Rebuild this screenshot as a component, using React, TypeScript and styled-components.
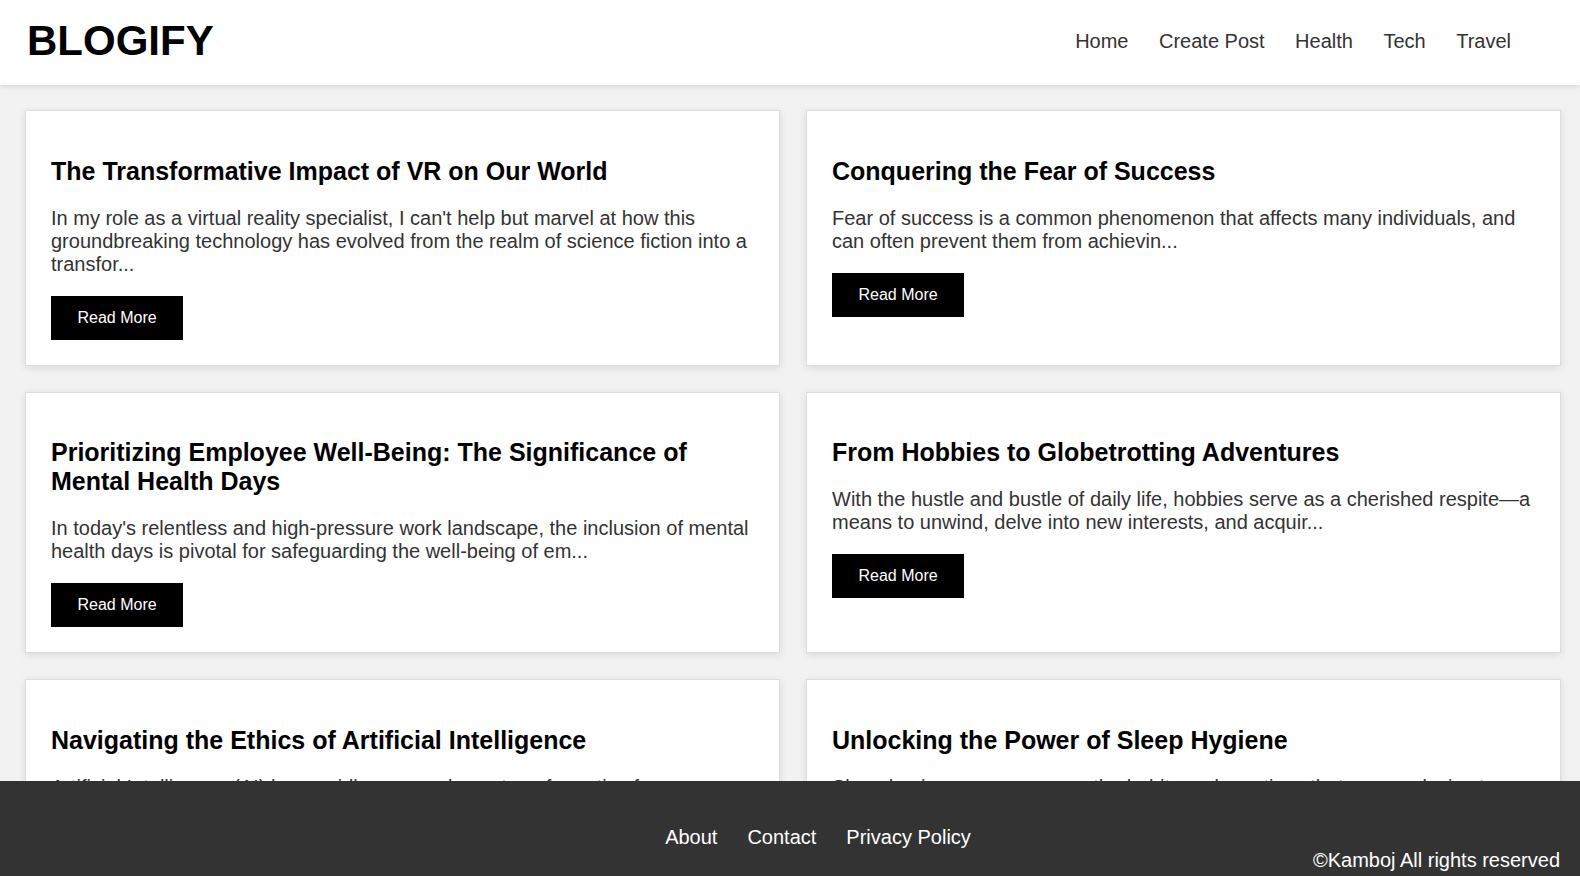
import {createGlobalStyle, styled} from 'styled-components';

const GlobalStyle = createGlobalStyle`
  html,
  body {
    margin: 0;
    padding: 0;
  }
  body {
    background: #f2f2f2;
    font-family: 'Liberation Sans', Arial, sans-serif;
    font-size: 20px;
    color: #333;
  }
`;

const Header = styled.header`
  position: relative;
  z-index: 2;
  height: 85px;
  box-sizing: border-box;
  padding: 0 69px 0 27px;
  display: flex;
  align-items: center;
  justify-content: space-between;
  background: #fff;
  box-shadow: 0 2px 5px rgba(0, 0, 0, 0.1);
`;

const Logo = styled.h1`
  margin: 0 0 3px;
  font-size: 42px;
  font-weight: bold;
  color: #000;
`;

const Nav = styled.nav`
  display: flex;
  gap: 30.5px;
  margin-bottom: 2px;
`;

const NavLink = styled.a`
  font-size: 20px;
  color: #333;
  text-decoration: none;
  cursor: pointer;
`;

const PostGrid = styled.main`
  display: grid;
  grid-template-columns: 1fr 1fr;
  gap: 26px;
  padding: 25px 19px 140px 25px;
`;

const Card = styled.article`
  background: #fff;
  border: 1px solid #ddd;
  box-shadow: 0 2px 8px rgba(0, 0, 0, 0.1);
  padding: 25px;
`;

const CardTitle = styled.h2`
  margin: 20.75px 0;
  font-size: 25px;
  font-weight: bold;
  color: #000;
`;

const Excerpt = styled.p`
  margin: 20px 0;
  font-size: 20px;
  color: #333;
`;

const ReadMore = styled.a`
  display: inline-block;
  vertical-align: top;
  padding: 13px 26.5px;
  background: #000;
  color: #fff;
  font-size: 16px;
  text-decoration: none;
  cursor: pointer;
`;

// fixed footer sits over the bottom of the post list
const Footer = styled.footer`
  position: fixed;
  left: 0;
  right: 0;
  bottom: 0;
  z-index: 3;
  height: 95px;
  box-sizing: border-box;
  padding: 45px 20px 4px;
  background: #333;
  color: #fff;
`;

const FooterLinks = styled.div`
  display: flex;
  justify-content: center;
  gap: 30px;
  padding-left: 56px;
`;

const FooterLink = styled.a`
  color: #fff;
  font-size: 20px;
  text-decoration: none;
  cursor: pointer;
`;

const Copyright = styled.p`
  margin: 0;
  text-align: right;
  font-size: 20px;
`;

type Post = Readonly<{title: string; excerpt: string}>;

const posts: Post[] = [
  {
    title: 'The Transformative Impact of VR on Our World',
    excerpt:
      "In my role as a virtual reality specialist, I can't help but marvel at how this groundbreaking technology has evolved from the realm of science fiction into a transfor...",
  },
  {
    title: 'Conquering the Fear of Success',
    excerpt:
      'Fear of success is a common phenomenon that affects many individuals, and can often prevent them from achievin...',
  },
  {
    title: 'Prioritizing Employee Well-Being: The Significance of Mental Health Days',
    excerpt:
      "In today's relentless and high-pressure work landscape, the inclusion of mental health days is pivotal for safeguarding the well-being of em...",
  },
  {
    title: 'From Hobbies to Globetrotting Adventures',
    excerpt:
      'With the hustle and bustle of daily life, hobbies serve as a cherished respite\u2014a means to unwind, delve into new interests, and acquir...',
  },
  {
    title: 'Navigating the Ethics of Artificial Intelligence',
    excerpt:
      'Artificial Intelligence (AI) has rapidly emerged as a transformative force, reshaping the way we live, work and int...',
  },
  {
    title: 'Unlocking the Power of Sleep Hygiene',
    excerpt:
      'Sleep hygiene encompasses the habits and practices that are conducive to sleeping well on a regular basis, and is...',
  },
];

const navItems = ['Home', 'Create Post', 'Health', 'Tech', 'Travel'];
const footerItems = ['About', 'Contact', 'Privacy Policy'];

function PostCard({post}: {post: Post}) {
  return (
    <Card>
      <CardTitle>{post.title}</CardTitle>
      <Excerpt>{post.excerpt}</Excerpt>
      <ReadMore>Read More</ReadMore>
    </Card>
  );
}

export default function App() {
  return (
    <>
      <GlobalStyle />
      <Header>
        <Logo>BLOGIFY</Logo>
        <Nav>
          {navItems.map(item => (
            <NavLink key={item}>{item}</NavLink>
          ))}
        </Nav>
      </Header>
      <PostGrid>
        {posts.map(post => (
          <PostCard key={post.title} post={post} />
        ))}
      </PostGrid>
      <Footer>
        <FooterLinks>
          {footerItems.map(item => (
            <FooterLink key={item}>{item}</FooterLink>
          ))}
        </FooterLinks>
        <Copyright>©Kamboj All rights reserved</Copyright>
      </Footer>
    </>
  );
}
